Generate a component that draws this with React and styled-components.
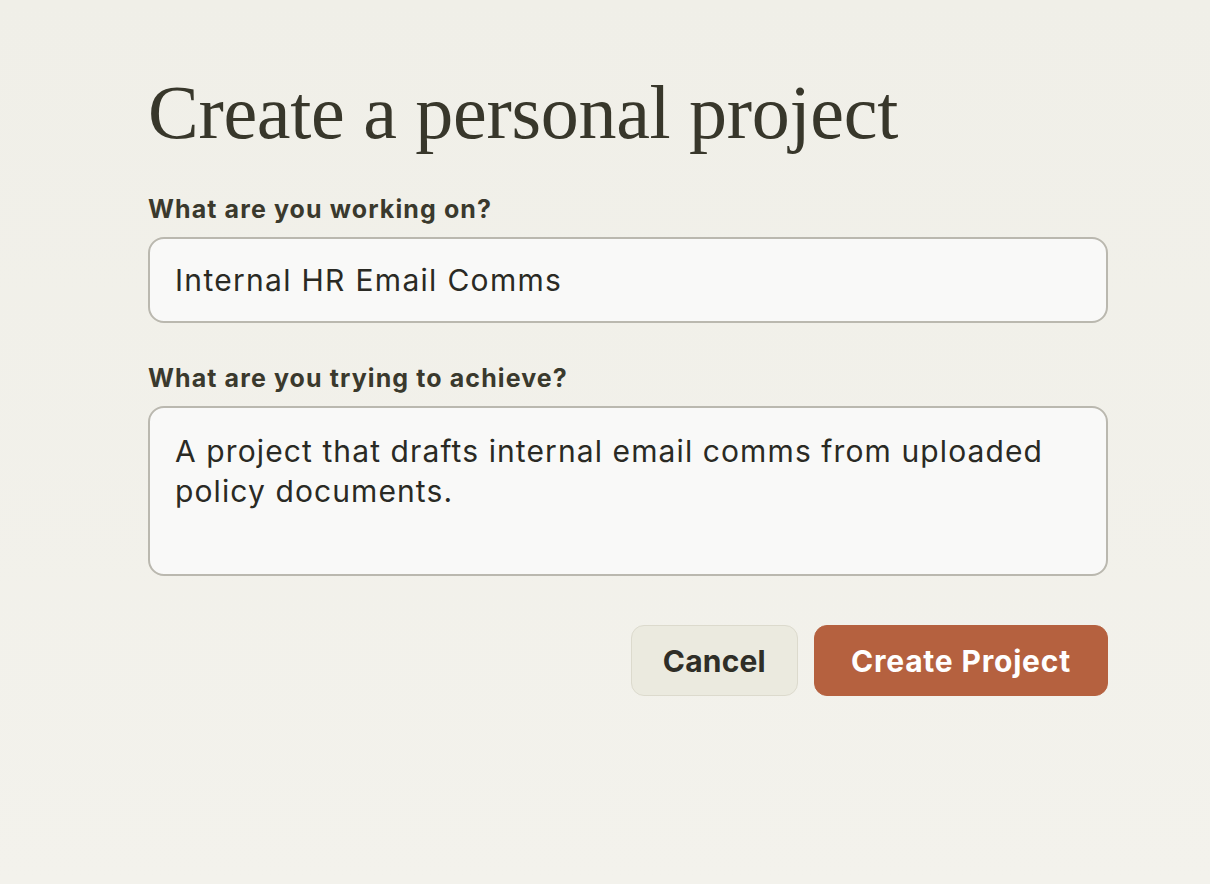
import styled, { createGlobalStyle } from "styled-components";

const Global = createGlobalStyle`
  * { box-sizing: border-box; }
  html, body { margin: 0; padding: 0; }
  body {
    background: linear-gradient(180deg, #f0efe8 0%, #f3f2ec 100%);
    min-height: 100vh;
    font-family: Inter, "Noto Sans", sans-serif;
  }
`

const Page = styled.main`
  min-height: 100vh;
  padding: 70px 0 0 148px;
`

const Form = styled.form`
  width: 960px;
  display: flex;
  flex-direction: column;
`

const Heading = styled.h1`
  margin: 0 0 40px 0;
  font-family: "Liberation Serif", serif;
  font-weight: 400;
  font-size: 76px;
  line-height: 84px;
  color: #38372b;
  letter-spacing: -0.3px;
`

const Label = styled.label`
  display: block;
  font-size: 25px;
  line-height: 30px;
  font-weight: 700;
  letter-spacing: 1.1px;
  color: #3a392d;
  margin-bottom: 13px;
`

const Field = styled.div`
  display: flex;
  flex-direction: column;
  margin-bottom: ${p => p.$gap || 0}px;
`

const Input = styled.input`
  height: 86px;
  border: 2px solid #bab8af;
  border-radius: 16px;
  background: #f9f9f8;
  padding: 0 25px;
  font-family: inherit;
  font-size: 30px;
  letter-spacing: 1.3px;
  color: #2a2a24;
  outline: none;
`

const TextArea = styled.textarea`
  height: 170px;
  border: 2px solid #bab8af;
  border-radius: 16px;
  background: #f9f9f8;
  padding: 23px 25px;
  font-family: inherit;
  font-size: 30px;
  line-height: 40px;
  letter-spacing: 1.1px;
  color: #2a2a24;
  resize: none;
  outline: none;
`

const Actions = styled.div`
  display: flex;
  justify-content: flex-end;
  gap: 16px;
  margin-top: 49px;
`

const Button = styled.button`
  height: 71px;
  padding: 0 ${p => (p.$primary ? 36 : 31)}px;
  border-radius: 13px;
  font-family: inherit;
  font-size: 30px;
  font-weight: 700;
  letter-spacing: ${p => (p.$primary ? 0.8 : 0.2)}px;
  cursor: pointer;
  border: 1px solid ${p => (p.$primary ? "#b5613f" : "#dcdacd")};
  background: ${p => (p.$primary ? "#b5613f" : "#ebeadf")};
  color: ${p => (p.$primary ? "#fff" : "#2f2e27")};
`

export default function App() {
  return (
    <Page>
      <Global />
      <Form onSubmit={e => e.preventDefault()}>
        <Heading>Create a personal project</Heading>
        <Field $gap={40}>
          <Label>What are you working on?</Label>
          <Input defaultValue="Internal HR Email Comms" />
        </Field>
        <Field>
          <Label>What are you trying to achieve?</Label>
          <TextArea defaultValue="A project that drafts internal email comms from uploaded policy documents." />
        </Field>
        <Actions>
          <Button type="button">Cancel</Button>
          <Button type="submit" $primary>Create Project</Button>
        </Actions>
      </Form>
    </Page>
  );
}
